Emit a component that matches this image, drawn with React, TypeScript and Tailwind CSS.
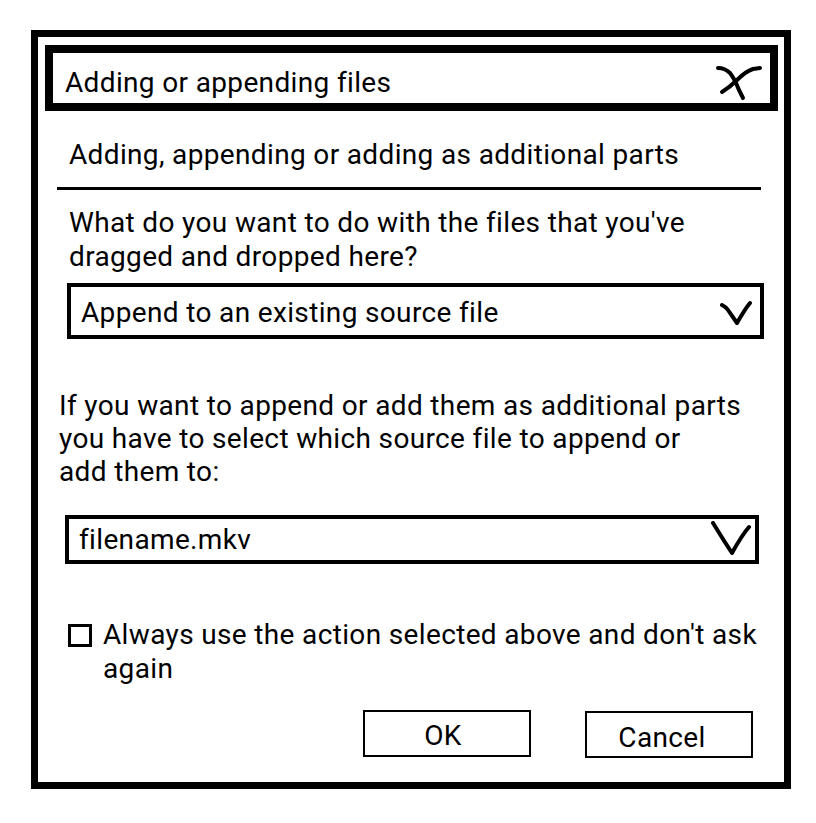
import React from 'react';

export default function App() {
  return (
    <div
      className="w-[816px] h-[823px] bg-white text-black pl-[31px] pt-[30px] tracking-[0.35px]"
      style={{ fontFamily: 'Roboto, "Liberation Sans", sans-serif' }}
    >
      <div className="w-[760px] h-[759px] border-[7px] border-black flex flex-col items-start">
        {/* Title bar */}
        <div className="ml-[7px] mt-[8px] w-[733px] h-[66px] border-[8px] border-black flex items-start justify-between pl-[12px] pt-[12px]">
          <span className="text-[28px] leading-[34px] mt-[1px]">Adding or appending files</span>
          <svg className="w-[48px] h-[46px] mr-[6px] -mt-[10px]" viewBox="0 0 48 46" fill="none" stroke="black" strokeWidth={4} strokeLinecap="round" strokeLinejoin="round">
            <path d="M2 13 C7 13 11 15 14 18 C18 23 21 30 23 35 C25 39 26 41 27 43" />
            <path d="M6 37 C11 34 17 29 21 25 C26 20 31 16 37 14 L44 13" />
          </svg>
        </div>

        {/* Subtitle */}
        <div className="ml-[31px] mt-[27px] text-[28px] leading-[34px]">
          Adding, appending or adding as additional parts
        </div>
        <div className="ml-[19px] mt-[15px] w-[704px] h-[3px] bg-black" />

        {/* Question */}
        <p className="ml-[31px] mt-[16px] w-[670px] text-[28px] leading-[34px]">
          What do you want to do with the files that you've dragged and dropped here?
        </p>

        {/* Action select */}
        <div className="ml-[29px] mt-[9px] w-[697px] h-[56px] border-[4px] border-black flex items-center justify-between pl-[10px] pr-[8px]">
          <span className="text-[28px] leading-[34px] mt-[3px]">Append to an existing source file</span>
          <svg className="w-[36px] h-[32px]" viewBox="0 0 36 32" fill="none" stroke="black" strokeWidth={4} strokeLinecap="round" strokeLinejoin="round">
            <path d="M6 10 C8 11 10 12 12 15 L21 28 C25 21 29 14 34 8" />
          </svg>
        </div>

        {/* Source file explanation */}
        <p className="ml-[21px] mt-[50px] text-[28px] leading-[33px]">
          If you want to append or add them as additional parts
          <br />
          you have to select which source file to append or
          <br />
          add them to:
        </p>

        {/* Source file select */}
        <div className="ml-[27px] mt-[27px] w-[694px] h-[49px] border-[4px] border-black flex items-center justify-between pl-[10px] pr-[3px]">
          <span className="text-[28px] leading-[34px]">filename.mkv</span>
          <svg className="w-[42px] h-[38px]" viewBox="0 0 42 38" fill="none" stroke="black" strokeWidth={4} strokeLinecap="round" strokeLinejoin="round">
            <path d="M3 2 C8 10 14 20 22 32 C27 23 32 14 39 6" />
          </svg>
        </div>

        {/* Don't ask again */}
        <div className="ml-[30px] mt-[54px] flex items-start gap-[11px]">
          <div className="mt-[6px] w-[24px] h-[23px] border-[3px] border-black shrink-0" />
          <p className="w-[675px] text-[28px] leading-[34px]">
            Always use the action selected above and don't ask again
          </p>
        </div>

        {/* Buttons */}
        <div className="ml-[325px] mt-[24px] flex items-start gap-[54px]">
          <button className="w-[168px] h-[47px] border-2 border-black flex items-center justify-center text-[28px] leading-[34px] pt-[4px] pr-[8px]">
            OK
          </button>
          <button className="mt-[1px] w-[168px] h-[47px] border-2 border-black flex items-center justify-center text-[28px] leading-[34px] pt-[6px] pr-[14px]">
            Cancel
          </button>
        </div>
      </div>
    </div>
  );
}
